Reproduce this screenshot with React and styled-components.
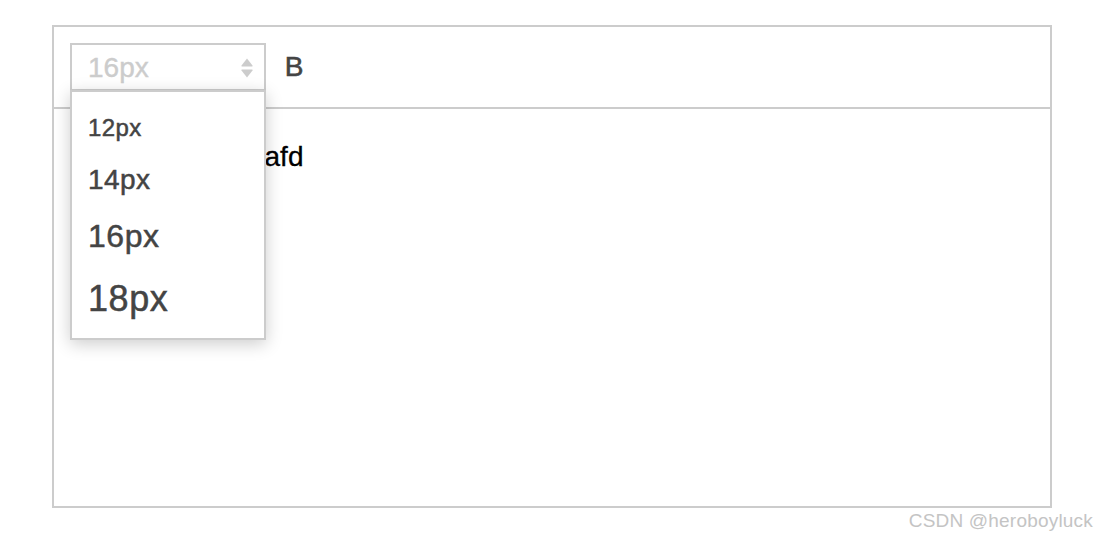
import styled, { createGlobalStyle } from "styled-components";

const GlobalStyle = createGlobalStyle`
  html, body {
    margin: 0;
    padding: 0;
    background: #fff;
  }
  body {
    font-family: "Liberation Sans", Arial, sans-serif;
  }
`;

const Page = styled.div`
  width: 1096px;
  height: 538px;
  box-sizing: border-box;
  padding: 25px 3px 0 52px;
  overflow: hidden;
`;

const Editor = styled.div`
  width: 1000px;
  height: 483px;
  box-sizing: border-box;
  border: 2px solid #ccc;
  display: flex;
  flex-direction: column;
`;

const Toolbar = styled.div`
  display: flex;
  align-items: center;
  padding: 16px;
  border-bottom: 2px solid #ccc;
  position: relative;
  z-index: 2;
`;

const Picker = styled.div`
  position: relative;
  width: 196px;
  height: 48px;
  color: #444;
`;

const PickerLabel = styled.div`
  height: 100%;
  box-sizing: border-box;
  border: 2px solid #ccc;
  display: flex;
  align-items: center;
  justify-content: space-between;
  padding: 1px 10px 0 16px;
  font-size: 28px;
  color: #ccc;
  -webkit-text-stroke: 0.4px #ccc;
`;

const Options = styled.div`
  position: absolute;
  top: 100%;
  left: 0;
  margin-top: -1px;
  width: 196px;
  box-sizing: border-box;
  background: #fff;
  border: 2px solid #ccc;
  box-shadow: 0 4px 16px rgba(0, 0, 0, 0.2);
  padding: 11px 16px 6px;
`;

const Option = styled.div`
  padding: 10px 0;
  font-size: ${(p) => p.$size}px;
  letter-spacing: ${(p) => p.$size / 60}px;
  line-height: 1.24;
  color: #444;
  -webkit-text-stroke: 0.5px #444;
`;

const BoldButton = styled.button`
  width: 56px;
  height: 48px;
  border: none;
  background: none;
  padding: 0;
  font-family: "Liberation Sans", Arial, sans-serif;
  font-size: 28px;
  color: #444;
  -webkit-text-stroke: 0.6px #444;
  display: flex;
  align-items: center;
  justify-content: center;
`;

const Content = styled.div`
  flex: 1;
  padding: 28px 30px;
  font-size: 28px;
  line-height: 1.42;
  color: #000;
  -webkit-text-stroke: 0.3px #000;
`;

const Watermark = styled.div`
  text-align: right;
  font-size: 19px;
  line-height: 26px;
  letter-spacing: 0.2px;
  color: #c4c4c4;
`;

const Arrows = () => (
  <svg width="14" height="22" viewBox="0 0 14 22">
    <path d="M7 1.5 L12.5 8.5 Q13 9.5 12 9.5 L2 9.5 Q1 9.5 1.5 8.5 Z" fill="#ccc" />
    <path d="M7 20.5 L12.5 13.5 Q13 12.5 12 12.5 L2 12.5 Q1 12.5 1.5 13.5 Z" fill="#ccc" />
  </svg>
);

const sizes = [12, 14, 16, 18];

export default function App() {
  return (
    <>
      <GlobalStyle />
      <Page>
        <Editor>
          <Toolbar>
            <Picker>
              <PickerLabel>
                <span>16px</span>
                <Arrows />
              </PickerLabel>
              <Options>
                {sizes.map((s) => (
                  <Option key={s} $size={s * 2}>
                    {s}px
                  </Option>
                ))}
              </Options>
            </Picker>
            <BoldButton>B</BoldButton>
          </Toolbar>
          <Content>dsafdsafdsafsfafd</Content>
        </Editor>
        <Watermark>CSDN @heroboyluck</Watermark>
      </Page>
    </>
  );
}
